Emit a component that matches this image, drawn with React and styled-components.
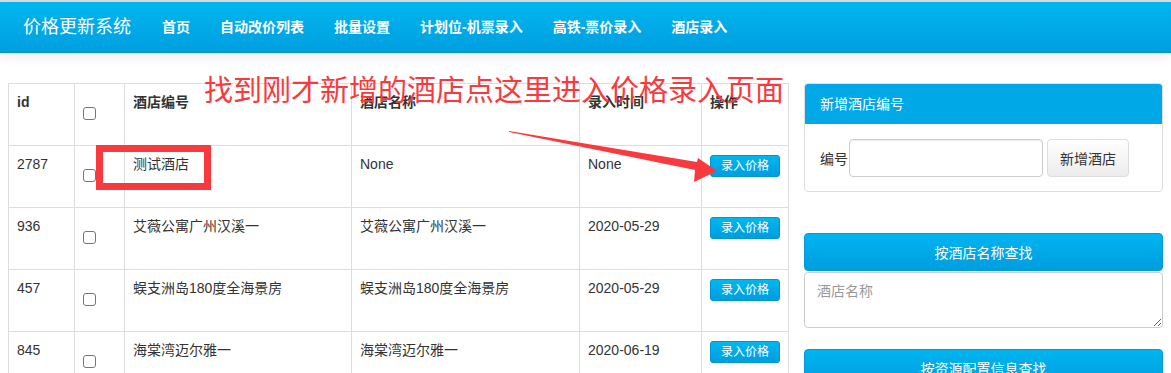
import React from "react";
import styled, { createGlobalStyle } from "styled-components";

const GlobalStyle = createGlobalStyle`
  html, body {
    margin: 0;
    padding: 0;
    background: #fff;
  }
  body {
    font-family: "Liberation Sans", "Noto Sans CJK SC", sans-serif;
    font-size: 14px;
    color: #333;
    overflow: hidden;
  }
  * {
    box-sizing: border-box;
  }
`;

const Page = styled.div`
  position: relative;
  width: 1171px;
  min-height: 373px;
  border-top: 2px solid #dedede;
`;

const Navbar = styled.nav`
  display: flex;
  align-items: center;
  height: 51px;
  padding-left: 23px;
  background: linear-gradient(to bottom, #00b6ef 0%, #009fdf 100%);
  border-bottom: 1px solid #0090cf;
  box-shadow: 0 3px 12px rgba(0, 0, 0, 0.09);
  position: relative;
  z-index: 1;
`;

const Brand = styled.a`
  color: #fff;
  font-size: 18px;
  margin-right: 16px;
  text-decoration: none;
  line-height: 51px;
`;

const NavLinkItem = styled.a`
  color: #fff;
  font-size: 14px;
  font-weight: bold;
  padding: 0 15px;
  text-decoration: none;
  line-height: 51px;
`;

const Main = styled.div`
  display: flex;
  align-items: flex-start;
  gap: 15px;
  padding: 30px 9px 0 8px;
`;

const LeftCol = styled.div`
  flex: 0 0 780px;
`;

const RightCol = styled.div`
  flex: 0 0 359px;
  display: flex;
  flex-direction: column;
`;

const Table = styled.table`
  width: 780px;
  table-layout: fixed;
  border-collapse: collapse;
  border: 1px solid #ddd;
`;

const Row = styled.tr`
  height: 62px;
`;

const Th = styled.th`
  border: 1px solid #ddd;
  padding: 8px;
  line-height: 20px;
  text-align: left;
  vertical-align: top;
  font-weight: bold;
  color: #333;
`;

const Td = styled.td`
  border: 1px solid #ddd;
  padding: 8px;
  line-height: 20px;
  vertical-align: top;
  color: #333;
`;

const Check = styled.input.attrs({ type: "checkbox" })`
  appearance: none;
  display: block;
  width: 13px;
  height: 13px;
  margin: 15px 0 0 0;
  border: 1px solid #767676;
  border-radius: 3px;
  background: #fff;
`;

const PriceButton = styled.button`
  display: block;
  width: 70px;
  height: 22px;
  margin-top: 1px;
  padding: 0;
  border: 1px solid #0095d8;
  border-radius: 3px;
  background: linear-gradient(to bottom, #00b7ef 0%, #009ddd 100%);
  color: #fff;
  font-family: "Liberation Sans", "Noto Sans CJK SC", sans-serif;
  font-size: 12px;
  line-height: 20px;
`;

const Card = styled.div`
  border: 1px solid #ddd;
  border-radius: 4px;
  overflow: hidden;
`;

const CardHeader = styled.div`
  height: 40px;
  line-height: 40px;
  padding-left: 15px;
  background: #00a8e8;
  color: #fff;
`;

const CardBody = styled.div`
  display: flex;
  align-items: center;
  padding: 15px 15px 14px;
`;

const Label = styled.label`
  margin-right: 1px;
`;

const TextInput = styled.input`
  width: 194px;
  height: 38px;
  border: 1px solid #ccc;
  border-radius: 4px;
  box-shadow: inset 0 1px 1px rgba(0, 0, 0, 0.075);
`;

const GrayButton = styled.button`
  width: 82px;
  height: 38px;
  margin-left: 4px;
  border: 1px solid #ddd;
  border-radius: 4px;
  background: linear-gradient(to bottom, #fff 0%, #ececec 100%);
  color: #333;
  font-family: "Liberation Sans", "Noto Sans CJK SC", sans-serif;
  font-size: 14px;
`;

const BlockButton = styled.button`
  width: 100%;
  height: 38px;
  margin-top: ${(p) => p.$top}px;
  border: 1px solid #009ad9;
  border-radius: 4px;
  background: linear-gradient(to bottom, #00b5ef 0%, #009ddf 100%);
  color: #fff;
  font-family: "Liberation Sans", "Noto Sans CJK SC", sans-serif;
  font-size: 14px;
`;

const TextArea = styled.textarea`
  width: 100%;
  height: 56px;
  margin-top: 1px;
  padding: 8px 12px;
  border: 1px solid #ccc;
  border-radius: 4px;
  font-family: "Liberation Sans", "Noto Sans CJK SC", sans-serif;
  font-size: 14px;
  line-height: 20px;
  color: #555;

  &::placeholder {
    color: #999;
  }
`;

const Note = styled.div`
  position: absolute;
  left: 204px;
  top: 70px;
  font-family: "Noto Sans CJK SC", sans-serif;
  font-size: 29px;
  line-height: 32px;
  color: #f83a3e;
  white-space: nowrap;
  pointer-events: none;
`;

const Mark = styled.div`
  position: absolute;
  left: 96px;
  top: 143px;
  width: 115px;
  height: 45px;
  border: 7px solid #f83a3e;
  pointer-events: none;
`;

const ArrowLayer = styled.svg`
  position: absolute;
  left: 0;
  top: 0;
  pointer-events: none;
`;

const rows = [
  { id: 2787, code: "测试酒店", name: "None", time: "None" },
  { id: 936, code: "艾薇公寓广州汉溪一", name: "艾薇公寓广州汉溪一", time: "2020-05-29" },
  { id: 457, code: "蜈支洲岛180度全海景房", name: "蜈支洲岛180度全海景房", time: "2020-05-29" },
  { id: 845, code: "海棠湾迈尔雅一", name: "海棠湾迈尔雅一", time: "2020-06-19" },
];

const links = ["首页", "自动改价列表", "批量设置", "计划位-机票录入", "高铁-票价录入", "酒店录入"];

export default function App() {
  return (
    <Page>
      <GlobalStyle />
      <Navbar>
        <Brand>价格更新系统</Brand>
        {links.map((l) => (
          <NavLinkItem key={l}>{l}</NavLinkItem>
        ))}
      </Navbar>

      <Main>
        <LeftCol>
          <Table>
            <colgroup>
              <col style={{ width: 66 }} />
              <col style={{ width: 50 }} />
              <col style={{ width: 227 }} />
              <col style={{ width: 228 }} />
              <col style={{ width: 122 }} />
              <col style={{ width: 87 }} />
            </colgroup>
            <thead>
              <Row>
                <Th>id</Th>
                <Th><Check /></Th>
                <Th>酒店编号</Th>
                <Th>酒店名称</Th>
                <Th>录入时间</Th>
                <Th>操作</Th>
              </Row>
            </thead>
            <tbody>
              {rows.map((r) => (
                <Row key={r.id}>
                  <Td>{r.id}</Td>
                  <Td><Check /></Td>
                  <Td>{r.code}</Td>
                  <Td>{r.name}</Td>
                  <Td>{r.time}</Td>
                  <Td><PriceButton>录入价格</PriceButton></Td>
                </Row>
              ))}
            </tbody>
          </Table>
        </LeftCol>

        <RightCol>
          <Card>
            <CardHeader>新增酒店编号</CardHeader>
            <CardBody>
              <Label>编号</Label>
              <TextInput />
              <GrayButton>新增酒店</GrayButton>
            </CardBody>
          </Card>
          <BlockButton $top={41}>按酒店名称查找</BlockButton>
          <TextArea placeholder="酒店名称" />
          <BlockButton $top={21}>按资源配置信息查找</BlockButton>
        </RightCol>
      </Main>

      <Note>找到刚才新增的酒店点这里进入价格录入页面</Note>
      <Mark />
      <ArrowLayer width="1171" height="373" viewBox="0 0 1171 373">
        <polygon
          points="509,129 697,160 698,156 717,169 694,180 695,168 509,130"
          fill="#f83a3e"
        />
      </ArrowLayer>
    </Page>
  );
}
